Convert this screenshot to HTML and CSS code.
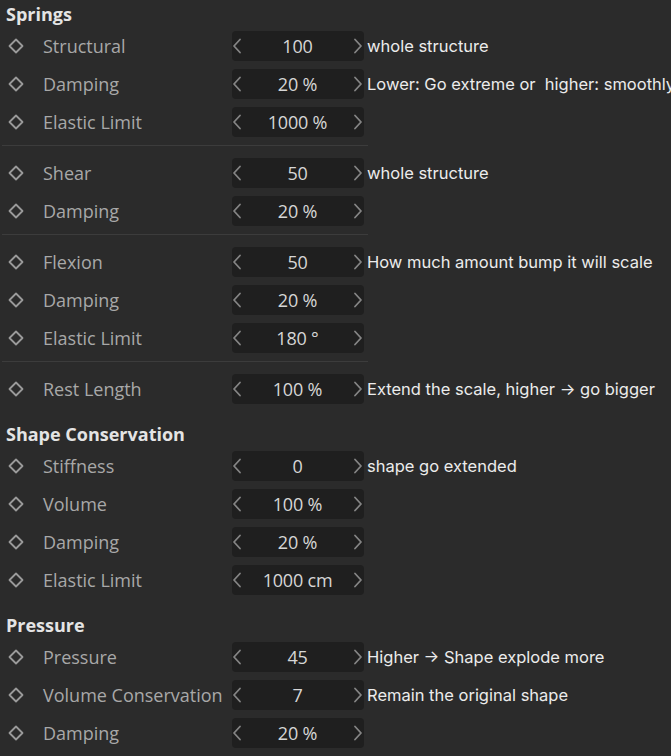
FILE: index.html
```html
<!DOCTYPE html>
<html>
<head>
<meta charset="utf-8">
<link rel="stylesheet" href="styles.css">
</head>
<body>
<div class="panel">
  <div class="section-title first">Springs</div>
  <div class="group">
    <div class="row"><span class="key"><svg viewBox="0 0 16 16"><path d="M8 1.5 L14.5 8 L8 14.5 L1.5 8 Z"/></svg></span><span class="label">Structural</span><span class="field"><svg class="chev" viewBox="0 0 10 16"><path d="M8 1.5 L2 8 L8 14.5"/></svg><span class="val">100</span><svg class="chev" viewBox="0 0 10 16"><path d="M2 1.5 L8 8 L2 14.5"/></svg></span><span class="note">whole structure</span></div>
    <div class="row"><span class="key"><svg viewBox="0 0 16 16"><path d="M8 1.5 L14.5 8 L8 14.5 L1.5 8 Z"/></svg></span><span class="label">Damping</span><span class="field"><svg class="chev" viewBox="0 0 10 16"><path d="M8 1.5 L2 8 L8 14.5"/></svg><span class="val">20 %</span><svg class="chev" viewBox="0 0 10 16"><path d="M2 1.5 L8 8 L2 14.5"/></svg></span><span class="note">Lower: Go extreme or&nbsp; higher: smoothly</span></div>
    <div class="row"><span class="key"><svg viewBox="0 0 16 16"><path d="M8 1.5 L14.5 8 L8 14.5 L1.5 8 Z"/></svg></span><span class="label">Elastic Limit</span><span class="field"><svg class="chev" viewBox="0 0 10 16"><path d="M8 1.5 L2 8 L8 14.5"/></svg><span class="val">1000 %</span><svg class="chev" viewBox="0 0 10 16"><path d="M2 1.5 L8 8 L2 14.5"/></svg></span></div>
  </div>
  <div class="sep"></div>
  <div class="group">
    <div class="row"><span class="key"><svg viewBox="0 0 16 16"><path d="M8 1.5 L14.5 8 L8 14.5 L1.5 8 Z"/></svg></span><span class="label">Shear</span><span class="field"><svg class="chev" viewBox="0 0 10 16"><path d="M8 1.5 L2 8 L8 14.5"/></svg><span class="val">50</span><svg class="chev" viewBox="0 0 10 16"><path d="M2 1.5 L8 8 L2 14.5"/></svg></span><span class="note">whole structure</span></div>
    <div class="row"><span class="key"><svg viewBox="0 0 16 16"><path d="M8 1.5 L14.5 8 L8 14.5 L1.5 8 Z"/></svg></span><span class="label">Damping</span><span class="field"><svg class="chev" viewBox="0 0 10 16"><path d="M8 1.5 L2 8 L8 14.5"/></svg><span class="val">20 %</span><svg class="chev" viewBox="0 0 10 16"><path d="M2 1.5 L8 8 L2 14.5"/></svg></span></div>
  </div>
  <div class="sep"></div>
  <div class="group">
    <div class="row"><span class="key"><svg viewBox="0 0 16 16"><path d="M8 1.5 L14.5 8 L8 14.5 L1.5 8 Z"/></svg></span><span class="label">Flexion</span><span class="field"><svg class="chev" viewBox="0 0 10 16"><path d="M8 1.5 L2 8 L8 14.5"/></svg><span class="val">50</span><svg class="chev" viewBox="0 0 10 16"><path d="M2 1.5 L8 8 L2 14.5"/></svg></span><span class="note">How much amount bump it will scale</span></div>
    <div class="row"><span class="key"><svg viewBox="0 0 16 16"><path d="M8 1.5 L14.5 8 L8 14.5 L1.5 8 Z"/></svg></span><span class="label">Damping</span><span class="field"><svg class="chev" viewBox="0 0 10 16"><path d="M8 1.5 L2 8 L8 14.5"/></svg><span class="val">20 %</span><svg class="chev" viewBox="0 0 10 16"><path d="M2 1.5 L8 8 L2 14.5"/></svg></span></div>
    <div class="row"><span class="key"><svg viewBox="0 0 16 16"><path d="M8 1.5 L14.5 8 L8 14.5 L1.5 8 Z"/></svg></span><span class="label">Elastic Limit</span><span class="field"><svg class="chev" viewBox="0 0 10 16"><path d="M8 1.5 L2 8 L8 14.5"/></svg><span class="val">180 °</span><svg class="chev" viewBox="0 0 10 16"><path d="M2 1.5 L8 8 L2 14.5"/></svg></span></div>
  </div>
  <div class="sep"></div>
  <div class="group">
    <div class="row"><span class="key"><svg viewBox="0 0 16 16"><path d="M8 1.5 L14.5 8 L8 14.5 L1.5 8 Z"/></svg></span><span class="label">Rest Length</span><span class="field"><svg class="chev" viewBox="0 0 10 16"><path d="M8 1.5 L2 8 L8 14.5"/></svg><span class="val">100 %</span><svg class="chev" viewBox="0 0 10 16"><path d="M2 1.5 L8 8 L2 14.5"/></svg></span><span class="note">Extend the scale, higher → go bigger</span></div>
  </div>

  <div class="section-title">Shape Conservation</div>
  <div class="group">
    <div class="row"><span class="key"><svg viewBox="0 0 16 16"><path d="M8 1.5 L14.5 8 L8 14.5 L1.5 8 Z"/></svg></span><span class="label">Stiffness</span><span class="field"><svg class="chev" viewBox="0 0 10 16"><path d="M8 1.5 L2 8 L8 14.5"/></svg><span class="val">0</span><svg class="chev" viewBox="0 0 10 16"><path d="M2 1.5 L8 8 L2 14.5"/></svg></span><span class="note">shape go extended</span></div>
    <div class="row"><span class="key"><svg viewBox="0 0 16 16"><path d="M8 1.5 L14.5 8 L8 14.5 L1.5 8 Z"/></svg></span><span class="label">Volume</span><span class="field"><svg class="chev" viewBox="0 0 10 16"><path d="M8 1.5 L2 8 L8 14.5"/></svg><span class="val">100 %</span><svg class="chev" viewBox="0 0 10 16"><path d="M2 1.5 L8 8 L2 14.5"/></svg></span></div>
    <div class="row"><span class="key"><svg viewBox="0 0 16 16"><path d="M8 1.5 L14.5 8 L8 14.5 L1.5 8 Z"/></svg></span><span class="label">Damping</span><span class="field"><svg class="chev" viewBox="0 0 10 16"><path d="M8 1.5 L2 8 L8 14.5"/></svg><span class="val">20 %</span><svg class="chev" viewBox="0 0 10 16"><path d="M2 1.5 L8 8 L2 14.5"/></svg></span></div>
    <div class="row"><span class="key"><svg viewBox="0 0 16 16"><path d="M8 1.5 L14.5 8 L8 14.5 L1.5 8 Z"/></svg></span><span class="label">Elastic Limit</span><span class="field"><svg class="chev" viewBox="0 0 10 16"><path d="M8 1.5 L2 8 L8 14.5"/></svg><span class="val">1000 cm</span><svg class="chev" viewBox="0 0 10 16"><path d="M2 1.5 L8 8 L2 14.5"/></svg></span></div>
  </div>

  <div class="section-title">Pressure</div>
  <div class="group">
    <div class="row"><span class="key"><svg viewBox="0 0 16 16"><path d="M8 1.5 L14.5 8 L8 14.5 L1.5 8 Z"/></svg></span><span class="label">Pressure</span><span class="field"><svg class="chev" viewBox="0 0 10 16"><path d="M8 1.5 L2 8 L8 14.5"/></svg><span class="val">45</span><svg class="chev" viewBox="0 0 10 16"><path d="M2 1.5 L8 8 L2 14.5"/></svg></span><span class="note">Higher → Shape explode more</span></div>
    <div class="row"><span class="key"><svg viewBox="0 0 16 16"><path d="M8 1.5 L14.5 8 L8 14.5 L1.5 8 Z"/></svg></span><span class="label">Volume Conservation</span><span class="field"><svg class="chev" viewBox="0 0 10 16"><path d="M8 1.5 L2 8 L8 14.5"/></svg><span class="val">7</span><svg class="chev" viewBox="0 0 10 16"><path d="M2 1.5 L8 8 L2 14.5"/></svg></span><span class="note">Remain the original shape</span></div>
    <div class="row"><span class="key"><svg viewBox="0 0 16 16"><path d="M8 1.5 L14.5 8 L8 14.5 L1.5 8 Z"/></svg></span><span class="label">Damping</span><span class="field"><svg class="chev" viewBox="0 0 10 16"><path d="M8 1.5 L2 8 L8 14.5"/></svg><span class="val">20 %</span><svg class="chev" viewBox="0 0 10 16"><path d="M2 1.5 L8 8 L2 14.5"/></svg></span></div>
  </div>
</div>
</body>
</html>
```

FILE: styles.css
```css
html, body {
  margin: 0;
  padding: 0;
  background: #2b2b2b;
  overflow: hidden;
}
body {
  width: 671px;
  height: 756px;
}
.panel {
  display: flex;
  flex-direction: column;
  width: 671px;
  overflow: hidden;
}
.section-title {
  height: 27px;
  margin-top: 12px;
  padding-left: 6px;
  display: flex;
  align-items: center;
  font-family: "Open Sans", "Noto Sans", sans-serif;
  font-weight: 700;
  font-size: 18px;
  color: #e4e4e4;
  letter-spacing: 0;
}
.section-title.first {
  margin-top: 0;
}
.group {
  display: flex;
  flex-direction: column;
}
.row {
  height: 38px;
  display: flex;
  align-items: center;
  white-space: nowrap;
}
.key {
  flex: none;
  width: 43px;
  display: flex;
  align-items: center;
  padding-left: 8px;
  box-sizing: border-box;
}
.key svg {
  width: 16px;
  height: 16px;
  fill: none;
  stroke: #9a9a9a;
  stroke-width: 1.8;
  stroke-linejoin: round;
}
.label {
  flex: none;
  width: 189px;
  font-family: "Open Sans", "Noto Sans", sans-serif;
  font-size: 18px;
  color: #a8a8a8;
  letter-spacing: 0;
}
.field {
  flex: none;
  width: 132px;
  height: 30px;
  background: #1f1f1f;
  border-radius: 4px;
  display: flex;
  align-items: center;
  justify-content: space-between;
  padding: 0 1px 0 0;
  box-sizing: border-box;
}
.chev {
  width: 10px;
  height: 16px;
  fill: none;
  stroke: #858585;
  stroke-width: 1.8;
  stroke-linecap: round;
  stroke-linejoin: round;
  flex: none;
}
.val {
  flex: 1;
  text-align: center;
  font-family: "Open Sans", "Noto Sans", sans-serif;
  font-size: 18px;
  color: #d6d6d6;
  letter-spacing: -0.2px;
}
.note {
  flex: none;
  margin-left: 3px;
  font-family: Inter, "Noto Sans", sans-serif;
  font-size: 16.5px;
  color: #ececec;
  margin-top: -1px;
}
.sep {
  width: 366px;
  height: 1px;
  margin: 4px 0 8px 2px;
  background: #3c3c3c;
}
```
